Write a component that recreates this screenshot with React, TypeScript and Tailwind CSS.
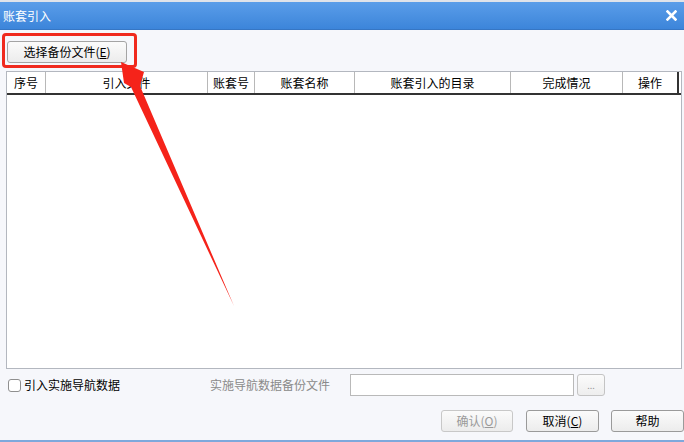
import React from "react";

const font = { fontFamily: '"Noto Sans CJK SC", "Noto Sans", sans-serif' };

const cols: [string, number][] = [
  ["序号", 39],
  ["引入文件", 162],
  ["账套号", 47],
  ["账套名称", 100],
  ["账套引入的目录", 156],
  ["完成情况", 112],
  ["操作", 56],
];

function Btn({ children, disabled, w, extra }: { children: React.ReactNode; disabled?: boolean; w: string; extra?: string }) {
  return (
    <div
      className={`${w} h-[22px] flex items-center justify-center rounded-[3px] border text-[12px] leading-none bg-gradient-to-b from-[#fbfbfb] to-[#ececec] ${
        disabled ? "border-[#c8c8c8] text-[#9a9a9a]" : "border-[#9a9a9a] text-black"
      } ${extra ?? ""}`}
    >
      {children}
    </div>
  );
}

export default function App() {
  return (
    <div className="relative w-[684px] h-[442px] overflow-hidden flex flex-col bg-[#f6f7fb]" style={font}>
      <div className="h-[2px] bg-[#dfe3ea]" />
      <div className="h-[28px] flex items-center justify-between pl-[3px] pr-[7px] bg-gradient-to-b from-[#5a9de9] to-[#3c85da] border-b border-[#3676c4]">
        <span className="text-white text-[12px] leading-none">账套引入</span>
        <svg width="11" height="11" viewBox="0 0 11 11">
          <path d="M1.5 1.5 L9.5 9.5 M9.5 1.5 L1.5 9.5" stroke="white" strokeWidth="2.6" strokeLinecap="square" />
        </svg>
      </div>

      <div className="flex-1 flex flex-col">
        <div className="mt-[11px] pl-[7px]">
          <Btn w="w-[120px]" extra="border-[#a4a4a4]">
            选择备份文件(<span className="underline">E</span>)
          </Btn>
        </div>

        <div className="mt-[8px] ml-[6px] mr-[2px] h-[298px] border border-[#b3b7bf] bg-white flex flex-col">
          <div className="flex h-[23px] border-b-2 border-[#333]">
            {cols.map(([t, w], i) => (
              <div
                key={t}
                style={{ width: w }}
                className={`shrink-0 flex items-center justify-center text-[12px] leading-none text-black ${
                  i === cols.length - 1 ? "border-r-2 border-[#333]" : "border-r border-[#b8b8b8]"
                }`}
              >
                {t}
              </div>
            ))}
          </div>
        </div>

        <div className="mt-[5px] flex items-center h-[22px]">
          <div className="ml-[8px] w-[13px] h-[13px] rounded-[3px] border border-[#8f8f8f] bg-white" />
          <span className="ml-[3px] text-[12px] leading-none text-black">引入实施导航数据</span>
          <span className="ml-[90px] text-[12px] leading-none text-[#8a8a8a]">实施导航数据备份文件</span>
          <div className="ml-[20px] w-[224px] h-[22px] border border-[#b9b9b9] bg-white" />
          <div className="ml-[3px] w-[28px] h-[22px] rounded-[3px] border border-[#c4c4c4] bg-gradient-to-b from-[#fbfbfb] to-[#eeeeee] flex items-center justify-center text-[9px] text-[#999] leading-none">
            ...
          </div>
        </div>

        <div className="mt-[14px] flex items-center">
          <div className="ml-[441px]">
            <Btn w="w-[72px]" disabled>
              确认(<span className="underline">O</span>)
            </Btn>
          </div>
          <div className="ml-[13px]">
            <Btn w="w-[73px]">
              取消(<span className="underline">C</span>)
            </Btn>
          </div>
          <div className="ml-[12px]">
            <Btn w="w-[73px]">帮助</Btn>
          </div>
        </div>
      </div>
      <div className="h-[2px] bg-[#7ea8dc]" />

      <div className="absolute left-[2px] top-[33px] w-[135px] h-[35px] rounded-[4px] border-[3px] border-[#f02a1e] pointer-events-none" />
      <svg className="absolute left-0 top-0 pointer-events-none" width="684" height="442">
        <polygon points="121,62 144,72 140,86 234,306 131,87 124,83" fill="#f5231a" />
      </svg>
    </div>
  );
}
